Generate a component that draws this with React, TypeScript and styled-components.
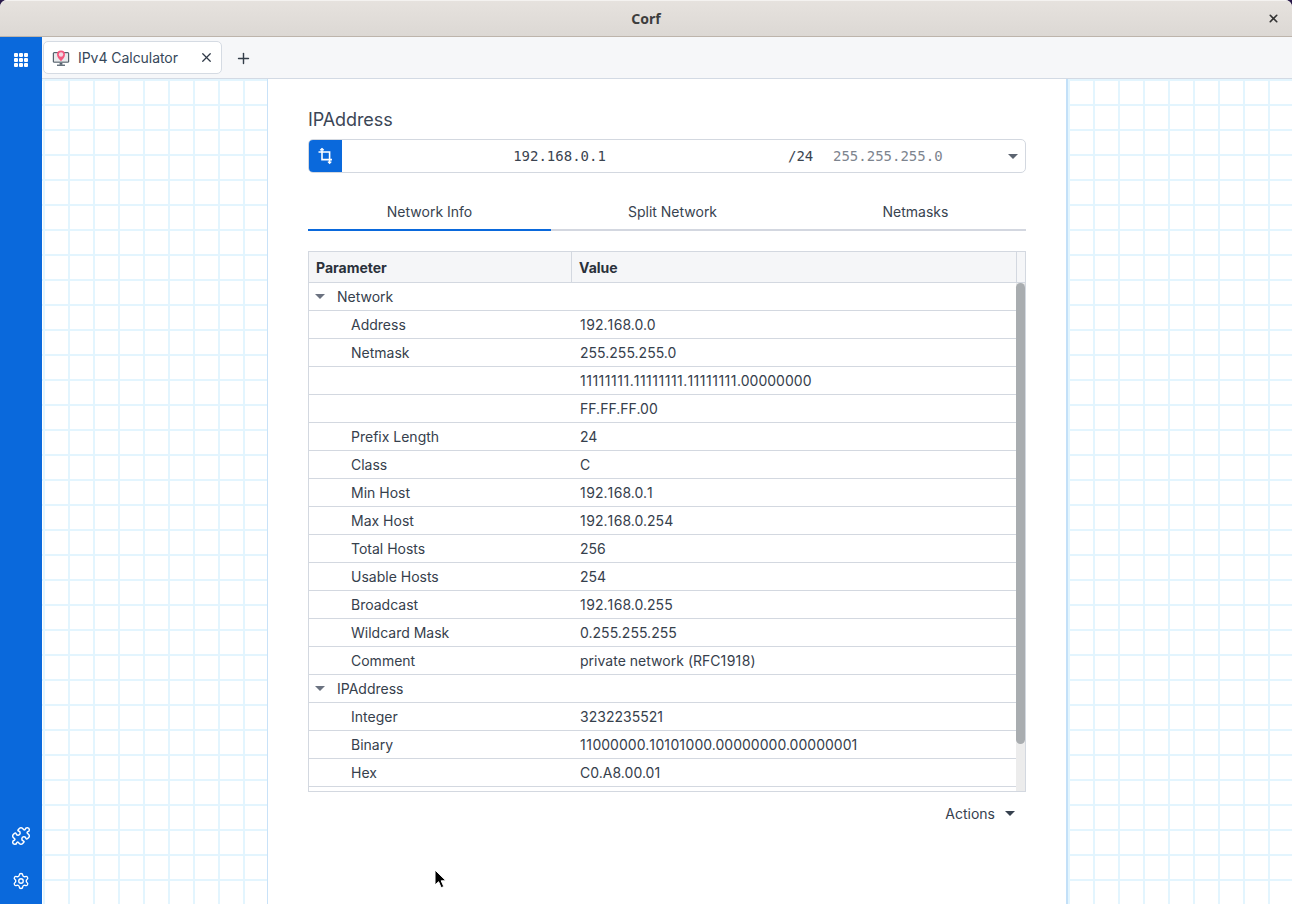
import React from "react";
import styled, { createGlobalStyle } from "styled-components";
import { Puzzle, Settings, X, Plus } from "lucide-react";

const Global = createGlobalStyle`
  html, body { margin: 0; padding: 0; height: 100%; background: #2a1a4a; }
  #root { height: 100%; }
  * { box-sizing: border-box; }
`;

const Win = styled.div`
  width: 1292px; height: 904px; display: flex; flex-direction: column; overflow: hidden;
  font-family: Inter, "Noto Sans", sans-serif; font-size: 14px; color: #2f3947;
  border-radius: 7px 7px 0 0; background: #fff; position: relative;
`;
const TitleBar = styled.div`
  height: 37px; flex: none; background: linear-gradient(#e6e2de, #dcd8d4); border-top: 1px solid #f4f2f0;
  border-bottom: 1px solid #bdb4ab; display: flex; align-items: center; justify-content: center; position: relative;
  font-weight: 700; font-size: 14px; color: #3d3d3d; font-family: "Noto Sans", Inter, sans-serif;
`;
const CloseWin = styled.span`
  position: absolute; right: 12px; top: 11px; display: flex; color: #333;
`;
const Body = styled.div`display: flex; flex: 1; min-height: 0;`;
const Rail = styled.div`
  width: 42px; flex: none; background: #0a69dc; display: flex; flex-direction: column; align-items: center;
  padding: 15px 0 14px; color: #fff;
`;
const RailSpacer = styled.div`flex: 1;`;
const RailBtn = styled.span`display: flex; & + & { margin-top: 26px; }`;
const Main = styled.div`flex: 1; display: flex; flex-direction: column; min-width: 0;`;
const TabBar = styled.div`
  height: 42px; flex: none; background: #f6f7f9; border-bottom: 1px solid #d3dae4;
  display: flex; align-items: flex-start; padding: 4px 0 0 1px;
`;
const Tab = styled.div`
  width: 179px; height: 33px; background: #fff; border: 1px solid #d5dbe3; border-radius: 5px;
  display: flex; align-items: center; padding: 0 7px 0 8px; color: #36475a;
`;
const TabLabel = styled.span`margin-left: 8px; flex: 1; font-size: 14px; white-space: nowrap; letter-spacing: -0.05px;`;
const TabClose = styled.span`display: flex; color: #2f3947;`;
const AddTab = styled.span`display: flex; margin: 9px 0 0 13px; color: #333d49;`;
const Canvas = styled.div`
  flex: 1; min-height: 0; display: flex;
  background-color: #fff;
  background-image:
    linear-gradient(to right, #e3f5fe 2px, transparent 2px),
    linear-gradient(to bottom, #e3f5fe 2px, transparent 2px);
  background-size: 25px 25px;
  background-position: 1px 0;
`;
const Panel = styled.div`
  width: 801px; flex: none; margin-left: 225px; background: #fff;
  border-left: 1px solid #c9e2f8; border-right: 2px solid #c3e0f8;
  padding: 29px 40px 0 40px;
  display: flex; flex-direction: column;
`;
const Heading = styled.div`font-size: 18px; line-height: 23px; color: #3b4656; margin-bottom: 8px; letter-spacing: -0.1px;`;
const InputGroup = styled.div`
  height: 34px; display: flex; align-items: center; border: 1px solid #d3d8e0; border-radius: 5px;
  font-family: "DejaVu Sans Mono", monospace; font-size: 14px; overflow: hidden; position: relative;
`;
const CropBtn = styled.span`
  width: 34px; height: 34px; margin: -1px 0 -1px -1px; background: #0a69dc; color: #fff;
  display: flex; align-items: center; justify-content: center; flex: none; padding-left: 1px;
`;
const Ip = styled.span`width: 435px; text-align: center; color: #3b4450;`;
const Prefix = styled.span`margin-left: 11px; color: #3b4450; width: 45px;`;
const Mask = styled.span`color: #7d848e;`;
const Caret = styled.span`
  width: 0; height: 0; border-left: 5px solid transparent; border-right: 5px solid transparent;
  border-top: 5px solid ${p => p.color || "#5c6470"};
`;
const SelectCaret = styled(Caret)`position: absolute; right: 7px; top: 14px;`;
const Tabs = styled.div`
  display: flex; height: 41px; margin-top: 17px; margin-bottom: 20px; overflow: hidden;
  box-shadow: inset 0 -2px 0 #d3d7e0;
`;
const TabItem = styled.div<{ $active?: boolean }>`
  flex: 0 0 243px; display: flex; align-items: center; justify-content: center;
  padding-top: 2px; font-size: 14px; color: #38434f;
  box-shadow: ${p => (p.$active ? "inset 0 -2px 0 #0a69dc" : "none")};
`;
const Table = styled.div`
  height: 541px; border: 1px solid #d3d8e0; position: relative; overflow: hidden; flex: none;
`;
const HeadRow = styled.div`
  display: flex; height: 31px; background: #f5f6f8; border-bottom: 1px solid #d3d8e0;
  font-weight: 700; font-size: 14px; color: #2a313b;
`;
const HeadCell = styled.div<{ $w?: number }>`
  ${p => (p.$w ? `width: ${p.$w}px; flex: none;` : "flex: 1;")}
  display: flex; align-items: center; padding-left: 7px; border-right: 1px solid #d3d8e0;
`;
const HeadEnd = styled.div`width: 8px; flex: none;`;
const Row = styled.div`
  display: flex; height: 28px; border-bottom: 1px solid #d3d8e0; margin-right: 9px; align-items: center;
  font-size: 14px; color: #36404c;
`;
const ParamCell = styled.div<{ $group?: boolean }>`
  width: 264px; flex: none; white-space: nowrap; display: flex; align-items: center;
  padding-left: ${p => (p.$group ? "6px" : "42px")};
  height: 100%;
`;
const GroupLabel = styled.span`margin-left: 12px;`;
const ValueCell = styled.div`padding-left: 7px; white-space: nowrap; letter-spacing: 0.02px;`;
const One = styled.span`letter-spacing: 0.5px;`;
const Track = styled.div`
  position: absolute; right: 0; top: 31px; bottom: 0; width: 9px; background: #ececec;
`;
const Thumb = styled.div`
  position: absolute; left: 0; top: 0; width: 9px; height: 461px; background: #a9adb0; border-radius: 5px;
`;
const Actions = styled.div`
  display: flex; justify-content: flex-end; align-items: center; gap: 10px; margin-top: 13px; padding-right: 10px;
  font-size: 14px; color: #36414f; line-height: 17px; margin-right: 1px;
`;
const Cursor = styled.svg`position: absolute; left: 434px; top: 869px;`;

const GridIcon = () => (
  <svg width="16" height="16" viewBox="0 0 16 16" fill="#fff">
    {[1, 6, 11].flatMap(y => [1, 6, 11].map(x => <rect key={`${x}-${y}`} x={x} y={y} width="4" height="4" rx="1" />))}
  </svg>
);
const CropIcon = () => (
  <svg width="18" height="18" viewBox="0 0 18 18" fill="none" stroke="#fff" strokeWidth="1.6">
    <path d="M5 1.8V12.6H15M1.5 5H12.6V16" />
    <path d="M3.2 3.2 5 1.5 6.8 3.2M10.9 14.6l1.7 1.7 1.7-1.7" strokeWidth="1.2" />
  </svg>
);
const AppIcon = () => (
  <svg width="18" height="18" viewBox="0 0 18 18">
    <rect x="0.8" y="3" width="16.4" height="10.8" rx="1.6" fill="#56636e" />
    <rect x="2" y="4.2" width="14" height="8.4" fill="#e9eaec" />
    <rect x="7.6" y="13.8" width="2.8" height="2" fill="#56636e" />
    <rect x="5" y="15.6" width="8" height="1.3" fill="#56636e" />
    <path d="M9 12.2C6.8 9.8 5 8.2 5 5.6a4 4 0 0 1 8 0C13 8.2 11.2 9.8 9 12.2Z" fill="#f4597e" />
    <circle cx="9" cy="5.5" r="2.2" fill="#f3d7e2" />
  </svg>
);

const Value = ({ text }: { text: string }) => (
  <ValueCell>
    {text.split(/(1)/).map((part, i) => (part === "1" ? <One key={i}>1</One> : part))}
  </ValueCell>
);

type R = [string, string] | { group: string };
const rows: R[] = [
  { group: "Network" },
  ["Address", "192.168.0.0"],
  ["Netmask", "255.255.255.0"],
  ["", "11111111.11111111.11111111.00000000"],
  ["", "FF.FF.FF.00"],
  ["Prefix Length", "24"],
  ["Class", "C"],
  ["Min Host", "192.168.0.1"],
  ["Max Host", "192.168.0.254"],
  ["Total Hosts", "256"],
  ["Usable Hosts", "254"],
  ["Broadcast", "192.168.0.255"],
  ["Wildcard Mask", "0.255.255.255"],
  ["Comment", "private network (RFC1918)"],
  { group: "IPAddress" },
  ["Integer", "3232235521"],
  ["Binary", "11000000.10101000.00000000.00000001"],
  ["Hex", "C0.A8.00.01"],
  ["", ""],
];

export default function App() {
  return (
    <Win>
      <Global />
      <TitleBar>
        Corf
        <CloseWin><X size={13} strokeWidth={3} /></CloseWin>
      </TitleBar>
      <Body>
        <Rail>
          <RailBtn><GridIcon /></RailBtn>
          <RailSpacer />
          <RailBtn><Puzzle size={20} strokeWidth={1.8} /></RailBtn>
          <RailBtn><Settings size={18} strokeWidth={1.8} /></RailBtn>
        </Rail>
        <Main>
          <TabBar>
            <Tab>
              <AppIcon />
              <TabLabel>IPv4 Calculator</TabLabel>
              <TabClose><X size={15} strokeWidth={2} /></TabClose>
            </Tab>
            <AddTab><Plus size={17} strokeWidth={2} /></AddTab>
          </TabBar>
          <Canvas>
            <Panel>
              <Heading>IPAddress</Heading>
              <InputGroup>
                <CropBtn><CropIcon /></CropBtn>
                <Ip>192.168.0.1</Ip>
                <Prefix>/24</Prefix>
                <Mask>255.255.255.0</Mask>
                <SelectCaret />
              </InputGroup>
              <Tabs>
                <TabItem $active>Network Info</TabItem>
                <TabItem>Split Network</TabItem>
                <TabItem>Netmasks</TabItem>
              </Tabs>
              <Table>
                <HeadRow>
                  <HeadCell $w={263}>Parameter</HeadCell>
                  <HeadCell>Value</HeadCell>
                  <HeadEnd />
                </HeadRow>
                {rows.map((r, i) =>
                  "group" in r ? (
                    <Row key={i}>
                      <ParamCell $group>
                        <Caret color="#6b7280" />
                        <GroupLabel>{r.group}</GroupLabel>
                      </ParamCell>
                    </Row>
                  ) : (
                    <Row key={i}>
                      <ParamCell>{r[0]}</ParamCell>
                      <Value text={r[1]} />
                    </Row>
                  )
                )}
                <Track><Thumb /></Track>
              </Table>
              <Actions>
                Actions
                <Caret color="#36414f" />
              </Actions>
            </Panel>
          </Canvas>
        </Main>
      </Body>
      <Cursor width="14" height="22" viewBox="0 0 14 22">
        <path d="M1 1v15l3.6-3.3 2.6 6 2.6-1.1-2.6-5.8H12Z" fill="#000" stroke="#fff" strokeWidth="1" />
      </Cursor>
    </Win>
  );
}
